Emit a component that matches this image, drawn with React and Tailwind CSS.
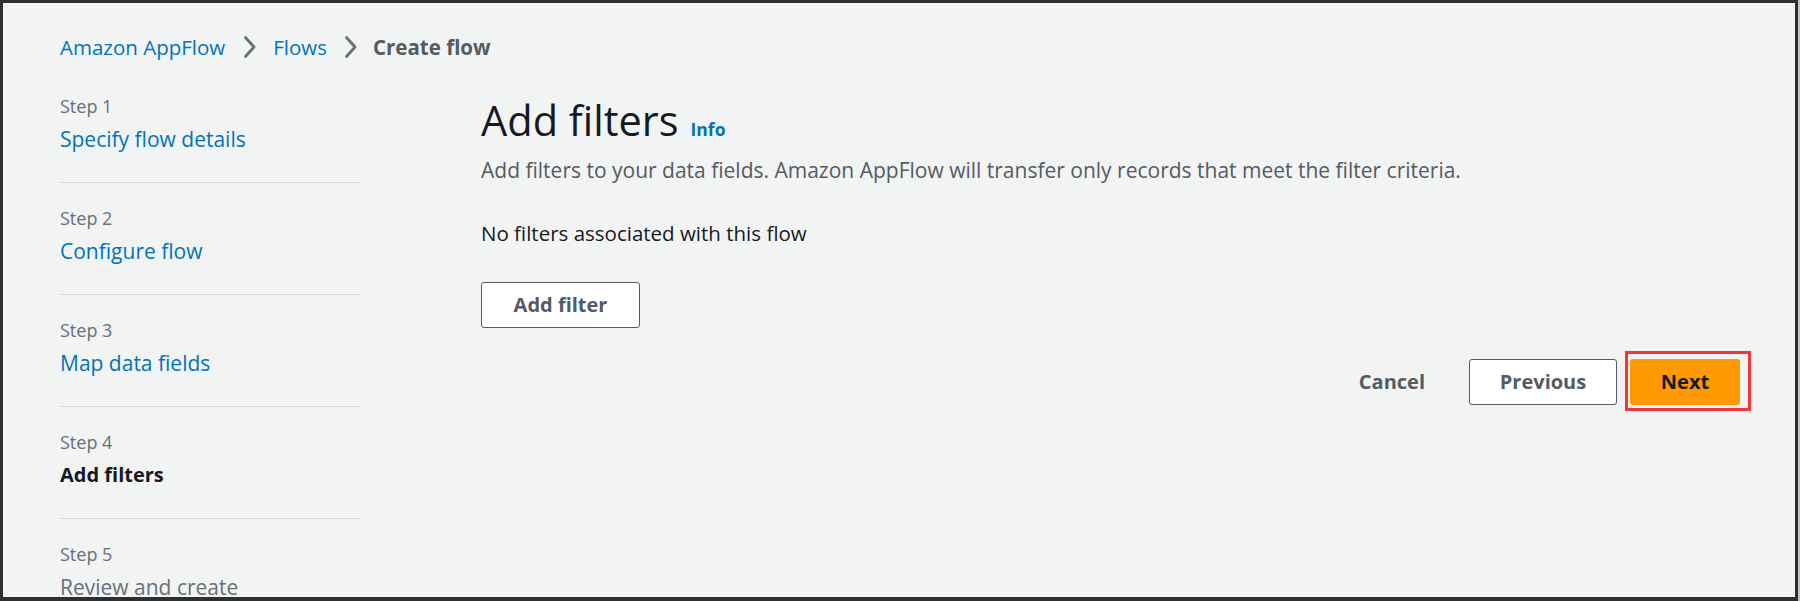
import React from "react";

const font = { fontFamily: '"Open Sans", "Noto Sans", sans-serif' };

function Chevron() {
  return (
    <svg width="15" height="24" viewBox="0 0 15 24">
      <path d="M3.5 2.5 L12 12 L3.5 21.5" fill="none" stroke="#687078" strokeWidth="2.8" strokeLinecap="round" strokeLinejoin="round" />
    </svg>
  );
}

function Step({ n, label, kind, first }) {
  return (
    <div className={first ? "" : "border-t border-[#d5dbdb] pt-[23px]"}>
      <div className="text-[18px] leading-[24px] text-[#687078]">Step {n}</div>
      <div
        className={
          "mt-[7px] leading-[28px] " +
          (kind === "link"
            ? "text-[21px] text-[#0073bb]"
            : kind === "active"
            ? "text-[20px] font-bold text-[#16191f]"
            : "text-[21px] text-[#687078]")
        }
      >
        {label}
      </div>
      <div className="h-[29px]" />
    </div>
  );
}

export default function App() {
  return (
    <div className="w-[1800px] h-[601px] bg-[#c4c4c4] overflow-hidden" style={font}>
      <div className="w-[1798px] h-[601px] border-l-[3px] border-t-[3px] border-r-[3px] border-b-[4px] border-[#2e2f30] bg-[#f2f3f3] overflow-hidden pl-[57px]">
        {/* Breadcrumb */}
        <div className="pt-[30px] flex items-center text-[20.5px] leading-[28px]">
          <span className="text-[#0073bb]">Amazon AppFlow</span>
          <span className="ml-[17px] mr-[16px] flex items-center"><Chevron /></span>
          <span className="text-[#0073bb]">Flows</span>
          <span className="ml-[16px] mr-[15px] flex items-center"><Chevron /></span>
          <span className="font-bold text-[#545b64]">Create flow</span>
        </div>

        <div className="mt-[33px] flex">
          {/* Nav */}
          <div className="w-[300px] shrink-0">
            <Step n={1} label="Specify flow details" kind="link" first />
            <Step n={2} label="Configure flow" kind="link" />
            <Step n={3} label="Map data fields" kind="link" />
            <Step n={4} label="Add filters" kind="active" />
            <Step n={5} label="Review and create" kind="disabled" />
          </div>

          {/* Main */}
          <div className="ml-[121px] flex-1 pr-[55px] pt-[2px]">
            <div className="flex items-baseline">
              <h1 className="text-[41.5px] leading-[48px] text-[#16191f]">Add filters</h1>
              <span className="ml-[12px] text-[17.5px] font-bold text-[#0073bb]">Info</span>
            </div>
            <p className="mt-[12px] text-[21px] leading-[28px] text-[#545b64]">
              Add filters to your data fields. Amazon AppFlow will transfer only records that meet the filter criteria.
            </p>
            <p className="mt-[35px] text-[20.5px] leading-[28px] text-[#16191f]">
              No filters associated with this flow
            </p>
            <button className="mt-[35px] w-[159px] h-[46px] bg-white border border-[#545b64] rounded-[3px] text-[20px] font-bold text-[#545b64] flex items-center justify-center">
              Add filter
            </button>

            <div className="mt-[31px] flex justify-end items-center">
              <button className="h-[46px] px-[20px] text-[20px] font-bold text-[#545b64]">Cancel</button>
              <button className="ml-[24px] w-[148px] h-[46px] bg-white border border-[#545b64] rounded-[3px] text-[20px] font-bold text-[#545b64] flex items-center justify-center">
                Previous
              </button>
              <div className="relative ml-[13px]">
                <button className="w-[110px] h-[46px] bg-[#ff9900] rounded-[3px] text-[20px] font-bold text-[#16191f] flex items-center justify-center">
                  Next
                </button>
                <div className="absolute left-[-5px] right-[-11px] top-[-8px] bottom-[-6px] border-[3px] border-[#f5333f] pointer-events-none" />
              </div>
            </div>
          </div>
        </div>
      </div>
    </div>
  );
}
